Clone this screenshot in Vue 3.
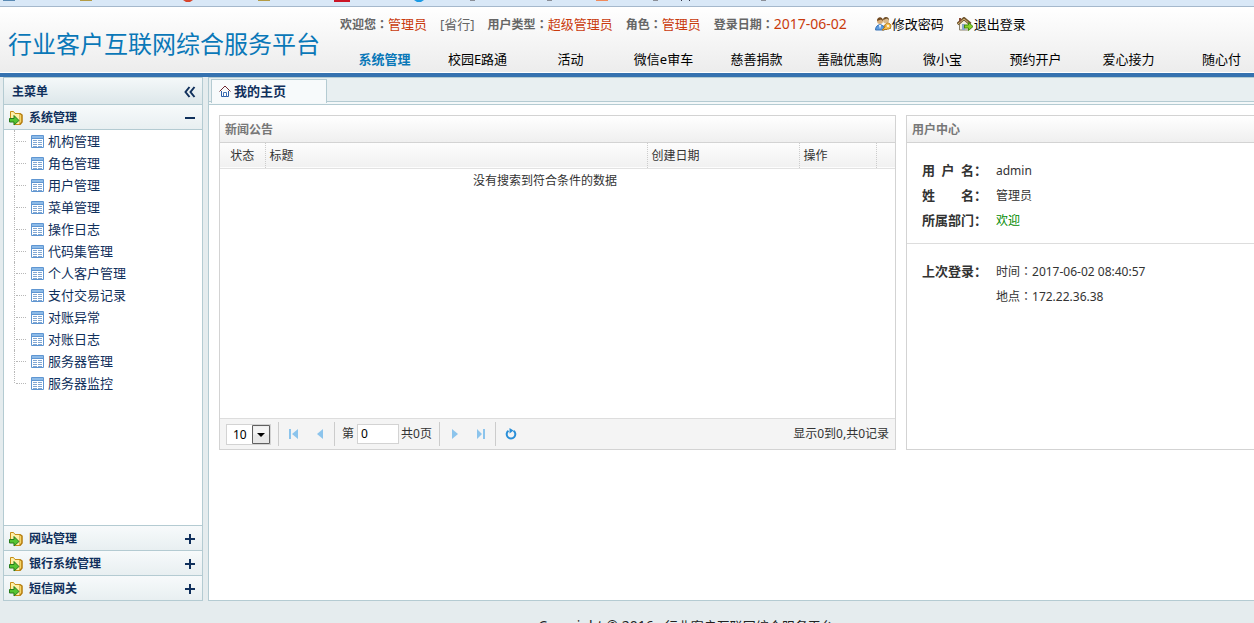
<script setup>
import { ref } from 'vue'

const navItems = ['系统管理', '校园E路通', '活动', '微信e审车', '慈善捐款', '善融优惠购', '微小宝', '预约开户', '爱心接力', '随心付']
const treeItems = ['机构管理', '角色管理', '用户管理', '菜单管理', '操作日志', '代码集管理', '个人客户管理', '支付交易记录', '对账异常', '对账日志', '服务器管理', '服务器监控']
const closedSections = ['网站管理', '银行系统管理', '短信网关']
const activeNav = ref(0)
const pageSize = ref('10')
const page = ref('0')
</script>

<template>
  <div class="page">
    <div class="bookmarks">
      <svg width="800" height="6" viewBox="0 0 800 6" aria-hidden="true">
        <path d="M3 0h12v1H3z" fill="#5a8ab4" />
        <path d="M80 0h12v1H80zM258 0h12v1h-12z" fill="#b39b45" />
        <path d="M183 0h10l-3 2h-4z" fill="#d8452c" />
        <path d="M334 0h16v2h-16z" fill="#cb1526" />
        <path d="M414 0h10l-3 2h-4z" fill="#1b9ae4" />
        <path d="M470 0h5v1h-5zM547 0h5v1h-5zM653 0h5v1h-5zM761 0h5v1h-5z" fill="#8b8f98" />
        <path d="M596 0h12v1h-12z" fill="#f08a5c" />
        <path d="M681 0h1v1h-1zM689 0h1v1h-1z" fill="#334" />
      </svg>
    </div>

    <header class="header">
      <h1 class="brand">行业客户互联网综合服务平台</h1>
      <div class="header-main">
        <div class="info">
          <span><b>欢迎您<i>：</i></b><em>管理员</em></span>
          <span class="branch">[省行]</span>
          <span><b>用户类型<i>：</i></b><em>超级管理员</em></span>
          <span><b>角色<i>：</i></b><em>管理员</em></span>
          <span><b>登录日期<i>：</i></b><em class="date">2017-06-02</em></span>
          <div class="actions">
            <a href="#">
              <svg width="17" height="14" viewBox="0 0 17 14" aria-hidden="true">
                <circle cx="11" cy="3.5" r="3" fill="#d9b98a" />
                <path d="M8 3c0-4 6-4 6 0l-2-1.500z" fill="#6a4a24" />
                <path d="M7 12c0-6 8-6 9-1v1z" fill="#b39a60" />
                <circle cx="5" cy="4" r="3" fill="#d9ae78" />
                <path d="M2 4c0-5 6-5 6 0L6 2.500z" fill="#704820" />
                <path d="M.5 13c0-7 9-7 9 0z" fill="#5c9be0" stroke="#3973b5" />
                <path d="M4 8l1 4 1-4z" fill="#fff" />
                <path d="M7 13l3-3a3 3 0 1 1 2 2l-1 1-1-1-1 1z" fill="#f5c052" stroke="#b97917" />
                <circle cx="13" cy="9" r="1" fill="#fff" />
              </svg>修改密码</a>
            <a href="#">
              <svg width="17" height="14" viewBox="0 0 17 14" aria-hidden="true">
                <path d="M2.500 7v6h9V7L7 2.500z" fill="#f3eddc" stroke="#8b826c" />
                <path d="M.5 7L7 1.500 13.500 7" fill="none" stroke="#715730" stroke-width="3" />
                <path d="M1 7L7 2l6 5" fill="none" stroke="#d8b878" />
                <path d="M2 1h2v3L2 5z" fill="#8a4a35" />
                <path d="M5 7h3v6H5z" fill="#8ba8cd" />
                <path d="M7.500 8h4V5.500L16 9.500l-4.500 4V11h-4z" fill="#8bd128" stroke="#438b0d" />
              </svg>退出登录</a>
          </div>
        </div>
        <nav class="nav">
          <a v-for="(item, i) in navItems" :key="item" href="#" :class="{ active: i === activeNav }" @click.prevent="activeNav = i">{{ item }}</a>
        </nav>
      </div>
    </header>

    <div class="body">
      <aside class="sidebar">
        <div class="side-title">
          <span>主菜单</span>
          <button type="button" aria-label="收起">
            <svg width="12" height="12" viewBox="0 0 12 12"><path d="M5.500 1L1.500 6l4 5M10.500 1l-4 5 4 5" fill="none" stroke="#10305c" stroke-width="2" /></svg>
          </button>
        </div>
        <button type="button" class="section">
          <svg width="16" height="16" viewBox="0 0 16 16"><path d="M1.500 8V1.500h3l1.500 2h5v11H5" fill="#fff0a8" stroke="#c58d16" /><path d="M11 3.500l2 1.500v7l-2 2.500" fill="#f6d66b" stroke="#b57c0d" stroke-width="1.500" /><path d="M.5 8.500H5v-3L10 10.500l-5 4.500v-3H.5z" fill="#55c431" stroke="#267b1d" /></svg>
          <span>系统管理</span>
          <svg width="12" height="12" viewBox="0 0 12 12"><path d="M1 6h10" stroke="#10305c" stroke-width="2" /></svg>
        </button>
        <ul class="tree">
          <li v-for="item in treeItems" :key="item">
            <a href="#">
              <svg width="13" height="13" viewBox="0 0 13 13"><path d="M.5.5h12v12H.5z" fill="#fff" stroke="#5f96d2" /><path d="M1 1h11v2H1z" fill="#8dbbe8" /><path d="M1 3h11v1H1z" fill="#5f96d2" /><path d="M2 5.500h4M7 5.500h4M2 7.500h4M7 7.500h4M2 9.500h4M7 9.500h4M2 11.500h4M7 11.500h4" stroke="#82a7d2" /></svg>
              <span>{{ item }}</span>
            </a>
          </li>
        </ul>
        <button v-for="item in closedSections" :key="item" type="button" class="section closed">
          <svg width="16" height="16" viewBox="0 0 16 16"><path d="M1.500 8V1.500h3l1.500 2h5v11H5" fill="#fff0a8" stroke="#c58d16" /><path d="M11 3.500l2 1.500v7l-2 2.500" fill="#f6d66b" stroke="#b57c0d" stroke-width="1.500" /><path d="M.5 8.500H5v-3L10 10.500l-5 4.500v-3H.5z" fill="#55c431" stroke="#267b1d" /></svg>
          <span>{{ item }}</span>
          <svg width="12" height="12" viewBox="0 0 12 12"><path d="M1 6h10M6 1v10" stroke="#10305c" stroke-width="2" /></svg>
        </button>
      </aside>

      <main class="main">
        <div class="tabs">
          <button type="button" class="tab">
            <svg width="12" height="12" viewBox="0 0 12 12"><path d="M2.500 6v5.500h7V6" fill="#fff" stroke="#2d5fa8" /><path d="M4.500 11.500v-4h3v4" fill="none" stroke="#4474b5" /><path d="M.5 6.500L6 1l5.500 5.500" fill="none" stroke="#6d2630" /></svg>
            <span>我的主页</span>
          </button>
        </div>
        <div class="panels">
          <section class="panel news">
            <h2>新闻公告</h2>
            <table>
              <colgroup><col class="c-state"><col><col class="c-date"><col class="c-op"><col class="c-end"></colgroup>
              <thead><tr><th class="center">状态</th><th>标题</th><th>创建日期</th><th>操作</th><th></th></tr></thead>
              <tbody><tr><td colspan="4">没有搜索到符合条件的数据</td><td></td></tr></tbody>
            </table>
            <footer class="pager">
              <div class="size">
                <select v-model="pageSize" aria-label="每页条数"><option>10</option><option>20</option><option>50</option></select>
                <svg width="18" height="19" viewBox="0 0 18 19"><path d="M.5.5h17v18H.5z" fill="#e8e8e8" stroke="#606060" /><path d="M1.500 1.500h15v8h-15z" fill="#f4f4f4" /><path d="M5 8h8l-4 4z" fill="#000" /></svg>
              </div>
              <span class="sep"></span>
              <button type="button" aria-label="首页"><svg width="10" height="10" viewBox="0 0 10 10"><path d="M0 0h2v10H0zM9 0v10L3 5z" /></svg></button>
              <button type="button" aria-label="上一页"><svg width="10" height="10" viewBox="0 0 10 10"><path d="M8 0v10L2 5z" /></svg></button>
              <span class="sep"></span>
              <label>第<input v-model="page" type="text"></label>
              <span class="total">共0页</span>
              <span class="sep"></span>
              <button type="button" aria-label="下一页"><svg width="10" height="10" viewBox="0 0 10 10"><path d="M2 0v10l6-5z" /></svg></button>
              <button type="button" aria-label="末页"><svg width="10" height="10" viewBox="0 0 10 10"><path d="M7 0h2v10H7zM1 0v10l5-5z" /></svg></button>
              <span class="sep"></span>
              <button type="button" aria-label="刷新"><svg width="12" height="12" viewBox="0 0 12 12"><path d="M3.500 2.700A4.300 4.300 0 1 0 8.500 2.700" fill="none" stroke="#2a8fd8" stroke-width="2" /><path class="tip" d="M4.500 0v5.500L8.500 2.500z" /></svg></button>
              <span class="count">显示0到0,共0记录</span>
            </footer>
          </section>

          <section class="panel user">
            <h2>用户中心</h2>
            <dl>
              <div><dt><span>用 户 名</span>：</dt><dd>admin</dd></div>
              <div><dt><span>姓 名</span>：</dt><dd>管理员</dd></div>
              <div><dt><span>所属部门</span>：</dt><dd class="green">欢迎</dd></div>
            </dl>
            <dl class="last">
              <div><dt><span>上次登录</span>：</dt><dd>时间<i>：</i>2017-06-02 08:40:57</dd><dd>地点<i>：</i>172.22.36.38</dd></div>
            </dl>
          </section>
        </div>
      </main>
    </div>
    <footer class="copyright"><span class="latin">Copyright © 2016</span><span>行业客户互联网综合服务平台</span></footer>
  </div>
</template>

<style>
body { margin: 0; background: #e5ecee; }
</style>

<style scoped>
* { box-sizing: border-box; }
.page {
  height: 100vh;
  display: flex;
  flex-direction: column;
  overflow: hidden;
  background: #e5ecee;
  color: #333;
  font: 12px/20px "Noto Sans", "Noto Sans CJK SC", sans-serif;
}
a { color: inherit; text-decoration: none; }
button { border: 0; padding: 0; background: none; font: inherit; color: inherit; cursor: pointer; }
svg { display: block; flex: none; }
i { font-style: normal; font-family: "Noto Sans CJK TC", sans-serif; line-height: 1; }
h1, h2, ul, dl, dd { margin: 0; padding: 0; }

.bookmarks { flex: none; background: #d9e8f7; }
.header {
  display: flex;
  flex: none;
  border-top: 1px solid #a5b8cc;
  border-bottom: 4px solid #3572b0;
  background: linear-gradient(#fff, #ececec);
  box-shadow: inset 0 -1px #fff;
}
.brand { flex: none; width: 338px; padding: 19px 0 0 8px; font-size: 24px; line-height: 36px; font-weight: 400; color: #0a78b8; }
.header-main { flex: 1; min-width: 0; }
.info { display: flex; gap: 13px; height: 27px; padding: 7px 0 0 2px; color: #666; white-space: nowrap; }
.info em { font-style: normal; font-size: 13px; color: #c93a0c; }
.info .date { font-size: 14px; }
.branch { font-size: 13px; }
.actions { display: flex; gap: 13px; padding-left: 15px; font-size: 13px; color: #000; }
.actions a { display: flex; align-items: center; height: 20px; }
.nav { display: flex; padding: 15px 0 4px; font-size: 13px; line-height: 20px; color: #000; white-space: nowrap; }
.nav a { flex: none; width: 93px; text-align: center; }
.nav .active { font-weight: 700; color: #0a78b8; }

.body { flex: 1; min-height: 0; display: flex; gap: 5px; padding-left: 3px; }
.sidebar { display: flex; flex-direction: column; flex: none; width: 200px; border: 1px solid #b4cbd2; background: #fff; color: #10305c; }
.side-title {
  display: flex;
  flex: none;
  align-items: center;
  justify-content: space-between;
  height: 27px;
  padding: 1px 6px 0 8px;
  border-bottom: 1px solid #b4cbd2;
  background: linear-gradient(#f4f8f9, #dde7ea);
  font-weight: 700;
}
.section {
  display: flex;
  flex: none;
  align-items: center;
  height: 25px;
  padding: 1px 6px 0 5px;
  border-bottom: 1px solid #b4cbd2;
  background: linear-gradient(#f7fafb, #e8eff1);
  font-weight: 700;
  text-align: left;
}
.section.closed { border-bottom: 0; border-top: 1px solid #b4cbd2; }
.section span { flex: 1; padding-left: 4px; }
.tree { flex: 1; min-height: 0; list-style: none; font-size: 13px; }
.tree li { position: relative; height: 22px; padding-left: 27px; }
.tree li::before { content: ""; position: absolute; left: 10px; top: 0; height: 22px; border-left: 1px dotted #b8b8b8; }
.tree li:last-child::before { height: 11px; }
.tree li::after { content: ""; position: absolute; left: 12px; top: 11px; width: 10px; border-top: 1px dotted #b8b8b8; }
.tree a { display: flex; align-items: center; gap: 4px; line-height: 22px; }

.main { flex: 1; min-width: 0; border: 1px solid #b4cbd2; border-right: 0; background: #fff; }
.tabs { display: flex; height: 27px; padding: 1px 0 0 2px; border-bottom: 1px solid #b4cbd2; background: linear-gradient(#e8eff1 0 23px, #b4cbd2 23px 24px, #f4f8f9 24px); }
.tab { display: flex; align-items: center; gap: 3px; width: 116px; height: 24px; padding: 0 7px 2px; border: 1px solid #b4cbd2; border-bottom: 0; background: #f7fafb; font-size: 13px; font-weight: 700; color: #10305c; }
.panels { display: grid; grid-template-columns: minmax(0, 1fr) 348px; gap: 10px; padding: 10px 0 0 10px; }
.panel { display: flex; flex-direction: column; min-height: 335px; border: 1px solid #d3d3d3; background: #fff; }
.user { border-right: 0; }
.panel h2 { padding: 4px 5px 2px; border-bottom: 1px solid #d3d3d3; background: linear-gradient(#fff, #efefef); font-size: 12px; line-height: 20px; color: #777; }
table { width: 100%; table-layout: fixed; border-collapse: collapse; }
.c-state { width: 45px; }
.c-date { width: 152px; }
.c-op { width: 77px; }
.c-end { width: 19px; }
thead tr { background: linear-gradient(#fdfdfd, #f1f1f1); border-bottom: 1px solid #e2e2e2; }
th { height: 25px; padding: 2px 4px 0; border-left: 1px dotted #ccc; text-align: left; font-weight: 400; }
th.center { border-left: 0; text-align: center; }
td { height: 26px; padding: 0 6px 0 0; text-align: center; }
.pager { display: flex; align-items: center; margin-top: auto; height: 31px; padding: 0 6px; border-top: 1px solid #ddd; background: #f4f4f4; }
.size { display: grid; align-items: center; width: 45px; height: 21px; border: 1px solid #d3d3d3; background: #fff; }
.size select, .size svg { grid-area: 1 / 1; }
.size select { appearance: none; width: 43px; height: 19px; padding: 0 6px; border: 0; background: #fff; font: inherit; color: #000; }
.size svg { justify-self: end; pointer-events: none; }
.sep { width: 1px; height: 24px; margin: 0 7px; background: #ccc; }
.pager button { display: grid; place-items: center; width: 20px; height: 20px; margin-right: 6px; fill: #8cc4ec; }
.pager button:has(+ .sep) { margin-right: 4px; }
.pager button + .sep { margin-left: 0; }
.sep + button { margin-left: -2px; }
.tip { fill: #2a8fd8; }
.pager label { display: flex; align-items: center; gap: 3px; }
.pager input { width: 42px; height: 20px; padding: 0 3px; border: 1px solid #d3d3d3; background: #fff; font: inherit; color: #000; }
.total { padding-left: 2px; }
.count { margin-left: auto; }
dl { padding: 15px 15px 10px; line-height: 25px; }
.last { border-top: 1px solid #ddd; }
dl div { display: grid; grid-template-columns: 74px 1fr; }
dt { display: flex; font-size: 13px; font-weight: 700; }
dt span { width: 52px; text-align-last: justify; }
dd { grid-column: 2; height: 25px; }
dl .green { color: #008a00; }

.copyright { display: flex; flex: none; justify-content: center; gap: 11px; height: 22px; padding: 15px 0 0 118px; font-size: 13px; line-height: 20px; color: #222; }
.latin { font-size: 14px; }
</style>
